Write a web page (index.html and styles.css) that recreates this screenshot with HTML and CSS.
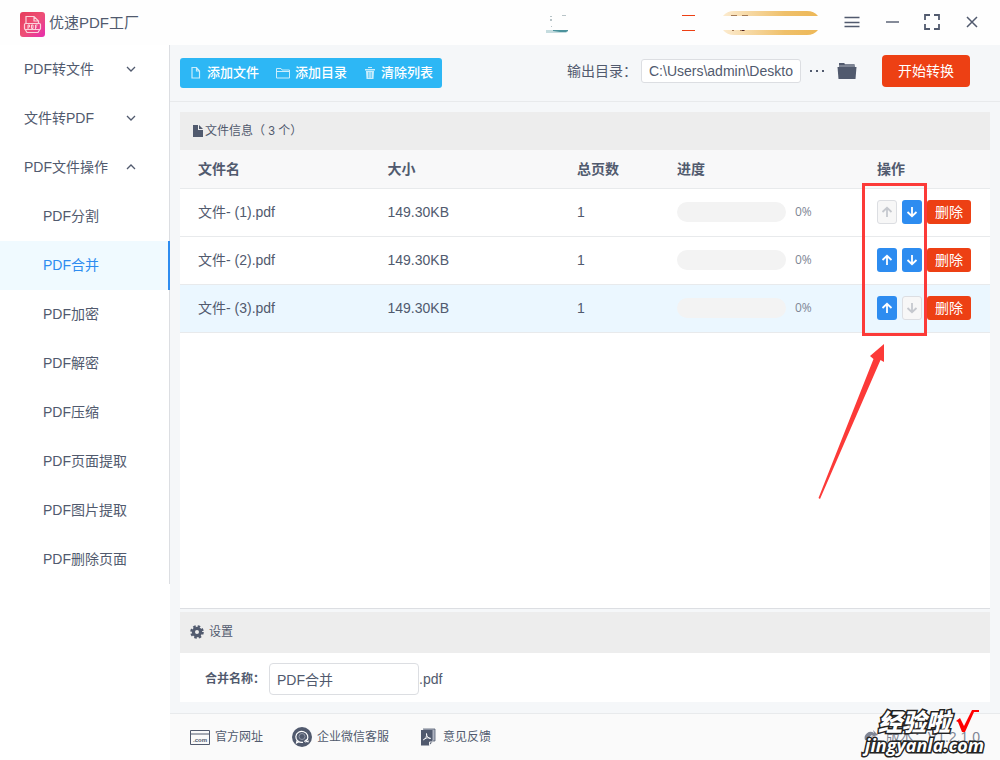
FILE: index.html
```html
<!DOCTYPE html>
<html lang="zh-CN">
<head>
<meta charset="utf-8">
<meta name="viewport" content="width=device-width, initial-scale=1">
<title>优速PDF工厂</title>
<link rel="stylesheet" href="styles.css">
</head>
<body>
<svg class="defs" aria-hidden="true">
  <symbol id="up" viewBox="0 0 12 12"><path d="M6 11V2M1.500 6L6 1.800L10.500 6" fill="none" stroke="currentColor" stroke-width="1.800"/></symbol>
  <symbol id="down" viewBox="0 0 12 12"><path d="M6 1V10M1.500 6L6 10.200L10.500 6" fill="none" stroke="currentColor" stroke-width="1.800"/></symbol>
  <symbol id="chev" viewBox="0 0 10 6"><path d="M1 1L5 5L9 1" fill="none" stroke="currentColor" stroke-width="1.300"/></symbol>
</svg>
<div class="app">
  <header class="titlebar">
    <svg class="logo" width="25" height="25" viewBox="0 0 25 25" aria-hidden="true">
      <defs><linearGradient id="lg" x1="0" y1="0" x2="1" y2="1"><stop offset="0" stop-color="#e63c5c"/><stop offset=".5" stop-color="#ee4f75"/><stop offset="1" stop-color="#e62db0"/></linearGradient></defs>
      <rect width="25" height="25" rx="3" fill="url(#lg)"/>
      <g fill="none" stroke="#fbd3dc" stroke-width="1.200"><path d="M6 11V4.500H14L18.500 9V11M14 4.500V9H18.500M5.500 18L7 20.500H18L19.500 18"/><rect x="4.500" y="11.500" width="16" height="6" rx="1"/><path d="M8 17V13H9.500V15H8M11.500 13V16.500H13V13H11.500M15.500 17V13H17.500M15.500 15H17" stroke-width="1"/></g>
    </svg>
    <h1 class="title">优速PDF工厂</h1>
    <svg class="promo" width="274" height="26" viewBox="0 0 274 26" aria-hidden="true">
      <defs><linearGradient id="gold"><stop offset="0" stop-color="#fcebcf"/><stop offset=".65" stop-color="#efc06a"/><stop offset="1" stop-color="#edb858"/></linearGradient></defs>
      <path d="M0 19H22V20L20 22H0Z" fill="#c5dcdf"/><path d="M7 19H22V20L20 21H14L7 20Z" fill="#4c929c"/>
      <path d="M4 5h2v1h-2zM4 8h2v2h-2zM5 15h1v1h-1zM16 4h4v1h-4z" fill="#b8c4c8"/>
      <path d="M136 4h13v1h-13zM136 19h13v1h-13z" fill="#ed4014"/>
      <path d="M177 5Q181 0 188 0H261Q268 0 272 5ZM177 19Q181 24 188 24H261Q268 24 272 19Z" fill="url(#gold)"/>
      <path d="M185 4h6v1h-6zM196 4h6v1h-6zM186 19h2v1h-2zM194 19h5v1h-5z" fill="#a47a55"/><path d="M196 19h2v1h-2z" fill="#4b2024"/>
    </svg>
    <div class="window-tools">
      <button class="tool" aria-label="菜单"><svg width="16" height="16" viewBox="0 0 16 16"><path d="M.5 3.500H15.500M.5 8.500H15.500M.5 12.500H15.500" stroke="currentColor" stroke-width="1.400" fill="none"/></svg></button>
      <button class="tool" aria-label="最小化"><svg width="16" height="16" viewBox="0 0 16 16"><path d="M2 8H15" stroke="currentColor" stroke-width="1.400"/></svg></button>
      <button class="tool" aria-label="最大化"><svg width="16" height="16" viewBox="0 0 16 16"><path d="M1 6V1H6M10 1H15V6M15 10V15H10M6 15H1V10" fill="none" stroke="currentColor" stroke-width="1.800"/></svg></button>
      <button class="tool" aria-label="关闭"><svg width="16" height="16" viewBox="0 0 16 16"><path d="M3 3L13 13M13 3L3 13" stroke="currentColor" stroke-width="1.500"/></svg></button>
    </div>
  </header>
  <div class="body">
    <aside class="sidebar">
      <nav class="menu">
        <a class="group" href="#to-file">PDF转文件<svg class="chev"><use href="#chev"/></svg></a>
        <a class="group" href="#to-pdf">文件转PDF<svg class="chev"><use href="#chev"/></svg></a>
        <a class="group" href="#operate">PDF文件操作<svg class="chev open"><use href="#chev"/></svg></a>
        <a class="item" href="#split">PDF分割</a>
        <a class="item active" href="#merge">PDF合并</a>
        <a class="item" href="#encrypt">PDF加密</a>
        <a class="item" href="#decrypt">PDF解密</a>
        <a class="item" href="#compress">PDF压缩</a>
        <a class="item" href="#pages">PDF页面提取</a>
        <a class="item" href="#images">PDF图片提取</a>
        <a class="item" href="#delete">PDF删除页面</a>
      </nav>
    </aside>
    <main class="main">
      <div class="toolbar">
        <div class="actions">
          <button class="action"><svg width="12" height="14" viewBox="0 0 12 14"><path d="M2 1.500H6.500L9.500 5V12H2ZM6.500 1.500V5H9.500" fill="none" stroke="currentColor" stroke-width="1.200"/></svg>添加文件</button>
          <button class="action"><svg width="14" height="14" viewBox="0 0 14 14"><path d="M.5 12V2.500H5L6 4H13.500V12ZM.5 5.500H13.500" fill="none" stroke="currentColor"/></svg>添加目录</button>
          <button class="action"><svg width="12" height="14" viewBox="0 0 12 14"><path d="M1 3H11V4.500H1ZM2 5H10L9.500 13H2.500ZM4 2V1H8V2" fill="currentColor"/><path d="M4.500 6V12M6 6V12M7.500 6V12" stroke="#2db7f5" stroke-width=".5"/></svg>清除列表</button>
        </div>
        <div class="output">
          <label for="dir">输出目录：</label>
          <input class="dir" id="dir" value="C:\Users\admin\Desktop">
          <button class="tool more" aria-label="选择目录"><svg width="16" height="4" viewBox="0 0 16 4"><path d="M1 1h2v2H1zM7 1h2v2H7zM13 1h2v2h-2z" fill="currentColor"/></svg></button>
          <button class="tool" aria-label="打开目录"><svg width="20" height="18" viewBox="0 0 20 18"><path d="M2 4V1.500L3 1H7L8 2H17.500L18 4V5H2Z" fill="#7d8494"/><path d="M2 1H7L8 3H2Z" fill="currentColor"/><path d="M.5 5H19.500L18.500 17H1.500Z" fill="currentColor"/></svg></button>
          <button class="start">开始转换</button>
        </div>
      </div>
      <div class="content">
        <section class="panel files">
          <h2 class="panel-head"><svg width="12" height="14" viewBox="0 0 12 14"><path d="M1 1H6V6H11V13H1Z" fill="currentColor"/><path d="M7 1L11 5H7Z" fill="currentColor"/></svg>文件信息（ 3 个）</h2>
          <table class="table">
            <colgroup><col><col><col class="c-pages"><col class="c-progress"><col class="c-ops"></colgroup>
            <thead><tr><th>文件名</th><th>大小</th><th>总页数</th><th>进度</th><th>操作</th></tr></thead>
            <tbody>
              <tr><td>文件- (1).pdf</td><td>149.30KB</td><td>1</td><td><div class="progress"><span class="bar"></span><span>0%</span></div></td><td><div class="ops"><button class="move" disabled aria-label="上移"><svg><use href="#up"/></svg></button><button class="move" aria-label="下移"><svg><use href="#down"/></svg></button><button class="delete">删除</button></div></td></tr>
              <tr><td>文件- (2).pdf</td><td>149.30KB</td><td>1</td><td><div class="progress"><span class="bar"></span><span>0%</span></div></td><td><div class="ops"><button class="move" aria-label="上移"><svg><use href="#up"/></svg></button><button class="move" aria-label="下移"><svg><use href="#down"/></svg></button><button class="delete">删除</button></div></td></tr>
              <tr class="selected"><td>文件- (3).pdf</td><td>149.30KB</td><td>1</td><td><div class="progress"><span class="bar"></span><span>0%</span></div></td><td><div class="ops"><button class="move" aria-label="上移"><svg><use href="#up"/></svg></button><button class="move" disabled aria-label="下移"><svg><use href="#down"/></svg></button><button class="delete">删除</button></div></td></tr>
            </tbody>
          </table>
          <svg class="callout" width="112" height="320" viewBox="0 0 112 320" aria-hidden="true">
            <rect x="47.500" y="2.500" width="62" height="150" fill="none" stroke="#fc3a38" stroke-width="3"/>
            <path d="M68 162V180L64.500 178L4 317L2.500 316L57.500 177L54 174Z" fill="#fc3a38"/>
          </svg>
        </section>
        <section class="panel settings">
          <h2 class="panel-head"><svg width="14" height="14" viewBox="0 0 14 14"><circle cx="7" cy="7" r="3.600" fill="none" stroke="currentColor" stroke-width="3.200"/><circle cx="7" cy="7" r="5.700" fill="none" stroke="currentColor" stroke-width="2.200" stroke-dasharray="2.500 1.977"/></svg>设置</h2>
          <div class="form-row"><label for="name">合并名称：</label><input class="name" id="name" value="PDF合并"><span>.pdf</span></div>
        </section>
      </div>
      <footer class="footer">
        <a href="#site"><svg width="20" height="16" viewBox="0 0 20 16"><path d="M.5 1.500H19.500V15.500H.5ZM.5 5H19.500" fill="none" stroke="currentColor"/><text x="3" y="13" font-size="6" font-weight="700" fill="currentColor">.com</text></svg>官方网址</a>
        <a href="#wechat"><svg width="20" height="20" viewBox="0 0 20 20"><circle cx="10" cy="10" r="10" fill="currentColor"/><path d="M14.800 13A6 5.500 0 1 0 11 15.300M5 13.500L4.500 16L7 14.800" fill="none" stroke="#fff" stroke-width="1.200"/><circle cx="10" cy="9.500" r="3" fill="none" stroke="#9298a7"/><path d="M12 14.500L16 12M14 12.500L16 15.500M13 15L17 14" stroke="#fff"/></svg>企业微信客服</a>
        <a href="#feedback"><svg width="20" height="18" viewBox="-2 0 20 18"><path d="M3 1H15V13H13" fill="#aeb3c0" stroke="currentColor" stroke-width=".8"/><path d="M1 2H12.500V14L9 17.500H1Z" fill="currentColor"/><path d="M3 12C6 11 7 8 6.500 5.500C6.500 8.500 8 10 11 10.500M4.500 11C7 9.500 8 9.500 10 10.500M9.500 17V14H12.500" fill="none" stroke="#fff" stroke-width=".9"/></svg>意见反馈</a>
        <span class="version"><svg width="18" height="16" viewBox="0 0 18 16"><path d="M2 11A6 6 0 0 1 11 4L10 1L15 6L8 8L10 6Q6 6 5 12Z" fill="currentColor"/></svg>版本：V1.2.1.0</span>
      </footer>
    </main>
  </div>
  <div class="watermark">
    <div class="wm-top">
      <span class="wm-name">经验啦</span>
      <svg width="26" height="26" viewBox="0 0 26 26" aria-hidden="true"><path d="M2 13L6 10L10 18L18 2H25V4H20L11 24H8L4 14Z" fill="#f00"/></svg>
    </div>
    <span class="wm-site">jingyanla.com</span>
  </div>
</div>
</body>
</html>
```
FILE: styles.css
```css
* { box-sizing: border-box; }
body {
  margin: 0;
  color: #515a6e;
  background: #fff;
  font: 14px/20px "Liberation Sans", "Noto Sans CJK SC", sans-serif;
}
button, input { font: inherit; color: inherit; }
button { border: 0; padding: 0; background: none; cursor: pointer; }
a { color: inherit; text-decoration: none; }
h1, h2 { margin: 0; font-weight: 400; }
svg { display: block; flex: none; }
.defs { position: absolute; width: 0; height: 0; }

.app { position: relative; display: flex; flex-direction: column; min-height: 100vh; }

.titlebar { display: flex; align-items: center; height: 45px; padding: 0 20px; background: #fefefe; }
.logo { margin-top: 3px; }
.title { margin-left: 4px; font-size: 15px; }
.promo { margin: 2px 24px 0 auto; }
.window-tools { display: flex; gap: 24px; padding-bottom: 2px; }
.tool { display: flex; align-items: center; justify-content: center; }

.body { display: flex; flex: 1; }
.sidebar { flex: none; width: 170px; }
.menu { border-right: 1px solid #dcdee2; }
.menu a { display: flex; align-items: center; height: 49px; padding-bottom: 2px; }
.menu .group { justify-content: space-between; padding-left: 24px; padding-right: 33px; }
.menu .item { padding-left: 43px; }
.menu .active { margin-right: -1px; color: #2d8cf0; background: #f0faff; border-right: 2px solid #2d8cf0; }
.chev { width: 10px; height: 6px; }
.chev.open { transform: rotate(180deg); }

.main { display: flex; flex: 1; flex-direction: column; min-width: 0; background: #f5f7f9; }
.toolbar { display: flex; align-items: center; justify-content: space-between; height: 57px; padding: 0 30px 0 10px; border-bottom: 1px solid #e8eaec; }
.actions { display: flex; height: 30px; padding: 0 9px 0 10px; gap: 17px; border-radius: 3px; background: #2db7f5; color: #fff; }
.action { display: flex; align-items: center; gap: 5px; font-size: 13px; font-weight: 500; }
.action svg { opacity: .75; }
.output { display: flex; align-items: center; padding-bottom: 4px; }
.dir { width: 160px; height: 24px; margin: 0 8px 0 4px; padding: 0 7px; border: 1px solid #dcdee2; border-radius: 3px; background: #fff; }
.more { margin-right: 12px; }
.start { width: 88px; height: 32px; margin-left: 25px; border-radius: 4px; color: #fff; background: #ed4014; }

.content { display: flex; flex: 1; flex-direction: column; gap: 3px; padding: 10px 10px 11px; }
.panel { background: #fff; }
.panel-head { display: flex; align-items: center; font-size: 12px; background: #ededed; }
.files { position: relative; flex: 1; border-bottom: 1px solid #dcdee2; }
.files .panel-head { height: 38px; padding-left: 12px; gap: 1px; }
.table { width: 100%; table-layout: fixed; border-collapse: collapse; }
.c-pages { width: 100px; }
.c-progress { width: 200px; }
.c-ops { width: 131px; }
.table th, .table td { padding: 0 0 0 18px; text-align: left; border-bottom: 1px solid #e8eaec; white-space: nowrap; }
.table th { height: 38px; background: #f8f8f9; font-weight: 700; }
.table td { height: 48px; }
.selected { background: #ebf7ff; }
.progress { display: flex; align-items: center; gap: 9px; font: 12px/20px "Open Sans", sans-serif; color: #808695; }
.bar { width: 109px; height: 20px; border-radius: 10px; background: #f3f3f3; }
.ops { display: flex; align-items: center; }
.move { display: flex; align-items: center; justify-content: center; width: 20px; height: 24px; margin-right: 5px; border-radius: 3px; color: #fff; background: #2d8cf0; }
.move svg { width: 12px; height: 12px; }
.move:disabled { color: #c5c8ce; background: #f7f7f7; border: 1px solid #dcdee2; }
.delete { width: 44px; height: 24px; border-radius: 3px; color: #fff; background: #ed4014; }
.callout { position: absolute; top: 70px; right: 62px; pointer-events: none; }

.settings .panel-head { height: 41px; padding: 0 0 2px 10px; gap: 5px; }
.form-row { display: flex; align-items: center; height: 49px; padding: 2px 0 0 25px; }
.form-row label { width: 64px; font-size: 12px; font-weight: 700; white-space: nowrap; }
.name { width: 150px; height: 32px; padding: 0 7px; border: 1px solid #dcdee2; border-radius: 4px; background: #fff; }

.footer { display: flex; align-items: center; height: 47px; padding: 0 20px; gap: 29px; border-top: 1px solid #e8eaec; background: #fafafa; font-size: 12px; }
.footer a, .version { display: flex; align-items: center; gap: 5px; }
.version { margin-left: auto; font-size: 14px; color: #808695; }

.watermark { position: absolute; right: 16px; bottom: 4px; display: flex; flex-direction: column; align-items: flex-end; color: #fff; -webkit-text-stroke: 3px #222; paint-order: stroke fill; pointer-events: none; }
.wm-top { display: flex; align-items: center; gap: 4px; margin-right: 4px; }
.wm-name { font: italic 900 24px/26px "Noto Sans CJK SC", sans-serif; }
.wm-site { font: italic 700 18px/22px "Open Sans", sans-serif; }
```
